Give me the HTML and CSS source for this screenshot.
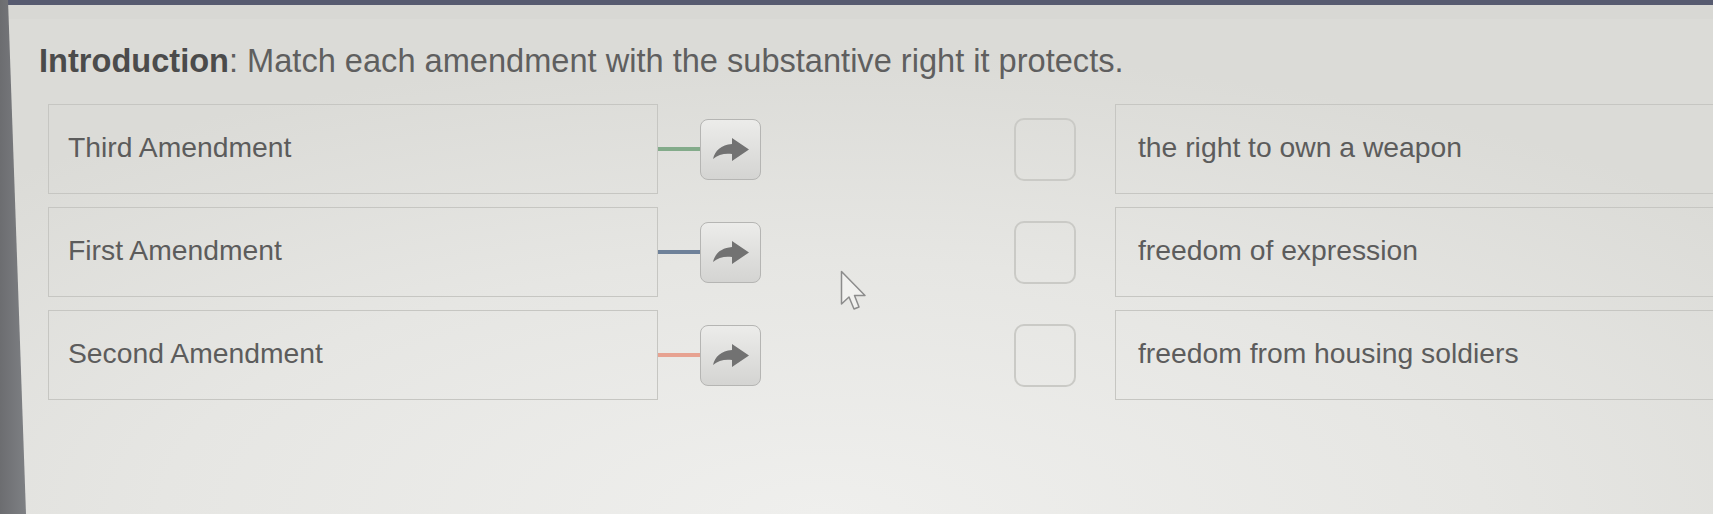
FILE: index.html
```html
<!DOCTYPE html>
<html lang="en">
<head>
    <meta charset="UTF-8">
    <title>Matching Activity</title>
    <link rel="stylesheet" href="styles.css">
</head>
<body>
    <div class="screen">
        <div class="chrome"></div>

        <main class="activity">
            <p class="prompt"><b>Introduction</b>: Match each amendment with the substantive right it protects.</p>

            <ul class="pairs">
                <li class="pair">
                    <div class="term">Third Amendment</div>
                    <span class="link link-green"></span>
                    <button class="drag" type="button">
                        <svg width="37" height="23" viewBox="0 0 37 23"><path d="M20 0 L37 11.5 L20 23 L20 16 C13 15 6 16.5 1 21 C3 12.5 9 7 20 6 Z"/></svg>
                    </button>
                    <span class="slot"></span>
                    <div class="answer">the right to own a weapon</div>
                </li>
                <li class="pair">
                    <div class="term">First Amendment</div>
                    <span class="link link-blue"></span>
                    <button class="drag" type="button">
                        <svg width="37" height="23" viewBox="0 0 37 23"><path d="M20 0 L37 11.5 L20 23 L20 16 C13 15 6 16.5 1 21 C3 12.5 9 7 20 6 Z"/></svg>
                    </button>
                    <span class="slot"></span>
                    <div class="answer">freedom of expression</div>
                </li>
                <li class="pair">
                    <div class="term">Second Amendment</div>
                    <span class="link link-red"></span>
                    <button class="drag" type="button">
                        <svg width="37" height="23" viewBox="0 0 37 23"><path d="M20 0 L37 11.5 L20 23 L20 16 C13 15 6 16.5 1 21 C3 12.5 9 7 20 6 Z"/></svg>
                    </button>
                    <span class="slot"></span>
                    <div class="answer">freedom from housing soldiers</div>
                </li>
            </ul>
        </main>

        <div class="bezel"></div>

        <svg class="cursor" width="26" height="44" viewBox="0 0 26 44">
            <path d="M1.5 1.5 L1.5 34 L9 27 L14 39 L19 37 L14.5 25.5 L25 25.5 Z"/>
        </svg>
    </div>
</body>
</html>
```

FILE: styles.css
```css
* {
    box-sizing: border-box;
}
body {
    margin: 0;
    width: 1713px;
    height: 514px;
    overflow: hidden;
    font-family: "Liberation Sans", Arial, sans-serif;
    background: #e3e3e0;
}
.screen {
    position: relative;
    height: 100%;
    background: radial-gradient(ellipse 70% 90% at 48% 100%, #efefed 0%, #e6e6e3 55%, #dbdbd7 100%);
}
.chrome {
    height: 19px;
    background: #d8d8d4;
    border-top: 5px solid #575b70;
}
.activity {
    padding-left: 39px;
}
.prompt {
    margin: 24px 0 0;
    font-size: 32.6px;
    line-height: 36px;
    color: #5f5f5f;
}
.prompt b {
    color: #4b4b4b;
}
.pairs {
    list-style: none;
    margin: 25px 0 0 9px;
    padding: 0;
    display: flex;
    flex-direction: column;
    gap: 13px;
}
.pair {
    display: flex;
    align-items: center;
    height: 90px;
}
.term,
.answer {
    height: 100%;
    display: flex;
    align-items: center;
    padding-bottom: 4px;
    border: 1px solid #c6c6c2;
    font-size: 28.3px;
    color: #5c5c5c;
}
.term {
    width: 610px;
    padding-left: 19px;
}
.link {
    width: 42px;
    height: 4px;
}
.link-green {
    background: #83ab8a;
}
.link-blue {
    background: #6e8199;
}
.link-red {
    background: #e7a291;
}
.drag {
    width: 61px;
    height: 61px;
    padding: 0;
    display: grid;
    place-items: center;
    border: 1px solid #b5b5b3;
    border-radius: 8px;
    background: linear-gradient(#ececea, #d4d4d2);
}
.drag svg {
    fill: #727272;
}
.slot {
    width: 62px;
    height: 63px;
    margin-left: 253px;
    border: 2px solid #cacac6;
    border-radius: 10px;
}
.answer {
    flex: 1;
    margin-left: 39px;
    padding-left: 22px;
    border-right: none;
}
.bezel {
    position: absolute;
    left: 0;
    top: 0;
    width: 26px;
    height: 100%;
    clip-path: polygon(0 0, 8px 0, 26px 100%, 0 100%);
    background: linear-gradient(to right, #6c6d70, #7e8084);
}
.cursor {
    position: absolute;
    left: 840px;
    top: 270px;
}
.cursor path {
    fill: #f1f1ef;
    stroke: #8c8c8c;
    stroke-width: 1.5;
    stroke-linejoin: round;
}
```
